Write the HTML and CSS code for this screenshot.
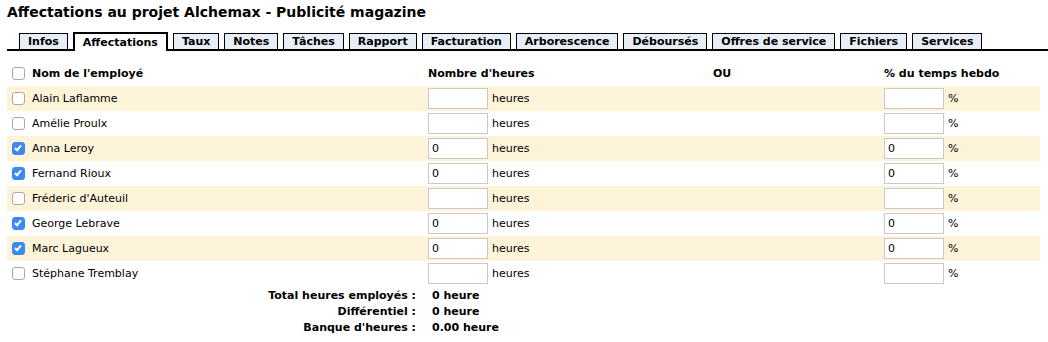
FILE: index.html
```html
<!DOCTYPE html>
<html lang="fr">
  <head>
    <meta charset="utf-8" />
    <title>Affectations au projet Alchemax</title>
    <link rel="stylesheet" href="styles.css">
  </head>
  <body>
    <h1 class="title">Affectations au projet Alchemax - Publicité magazine</h1>

    <ul class="tabs">
      <li>Infos</li>
      <li class="active">Affectations</li>
      <li>Taux</li>
      <li>Notes</li>
      <li>Tâches</li>
      <li>Rapport</li>
      <li>Facturation</li>
      <li>Arborescence</li>
      <li>Déboursés</li>
      <li>Offres de service</li>
      <li>Fichiers</li>
      <li>Services</li>
    </ul>

    <div class="assign">
      <div class="row head">
        <label class="emp"><input type="checkbox"> Nom de l'employé</label>
        <span>Nombre d'heures</span>
        <span>OU</span>
        <span>% du temps hebdo</span>
      </div>

      <div class="row stripe">
        <label class="emp"><input type="checkbox"> Alain Laflamme</label>
        <span class="amount"><input type="text"> heures</span>
        <span></span>
        <span class="amount"><input type="text"> %</span>
      </div>
      <div class="row">
        <label class="emp"><input type="checkbox"> Amélie Proulx</label>
        <span class="amount"><input type="text"> heures</span>
        <span></span>
        <span class="amount"><input type="text"> %</span>
      </div>
      <div class="row stripe">
        <label class="emp"><input type="checkbox" checked> Anna Leroy</label>
        <span class="amount"><input type="text" value="0"> heures</span>
        <span></span>
        <span class="amount"><input type="text" value="0"> %</span>
      </div>
      <div class="row">
        <label class="emp"><input type="checkbox" checked> Fernand Rioux</label>
        <span class="amount"><input type="text" value="0"> heures</span>
        <span></span>
        <span class="amount"><input type="text" value="0"> %</span>
      </div>
      <div class="row stripe">
        <label class="emp"><input type="checkbox"> Fréderic d'Auteuil</label>
        <span class="amount"><input type="text"> heures</span>
        <span></span>
        <span class="amount"><input type="text"> %</span>
      </div>
      <div class="row">
        <label class="emp"><input type="checkbox" checked> George Lebrave</label>
        <span class="amount"><input type="text" value="0"> heures</span>
        <span></span>
        <span class="amount"><input type="text" value="0"> %</span>
      </div>
      <div class="row stripe">
        <label class="emp"><input type="checkbox" checked> Marc Lagueux</label>
        <span class="amount"><input type="text" value="0"> heures</span>
        <span></span>
        <span class="amount"><input type="text" value="0"> %</span>
      </div>
      <div class="row">
        <label class="emp"><input type="checkbox"> Stéphane Tremblay</label>
        <span class="amount"><input type="text"> heures</span>
        <span></span>
        <span class="amount"><input type="text"> %</span>
      </div>
    </div>

    <dl class="totals">
      <dt>Total heures employés :</dt>
      <dd>0 heure</dd>
      <dt>Différentiel :</dt>
      <dd>0 heure</dd>
      <dt>Banque d'heures :</dt>
      <dd>0.00 heure</dd>
    </dl>
  </body>
</html>
```

FILE: styles.css
```css
*,
*::before,
*::after {
  box-sizing: border-box;
}

* {
  margin: 0;
}

body {
  font-family: Verdana, "DejaVu Sans", sans-serif;
  font-size: 11px;
  color: #000;
  background: #fff;
  padding: 4px 8px 0 7px;
}

.title {
  font-size: 14px;
  font-weight: bold;
  line-height: 17px;
}

.tabs {
  list-style: none;
  display: flex;
  align-items: flex-end;
  gap: 5px;
  padding: 0 0 0 12px;
  margin: 11px -8px 0 0;
  border-bottom: 2px solid #000;
}

.tabs li {
  font-weight: bold;
  height: 16px;
  line-height: 15px;
  padding: 0 8px;
  background: #e8eef7;
  border: 1px solid #000;
  border-bottom: none;
}

.tabs li.active {
  height: 19px;
  line-height: 17px;
  background: #fff;
  border: 2px solid #000;
  border-bottom: none;
  margin-bottom: -2px;
}

.assign {
  margin-top: 10px;
}

.row {
  display: grid;
  grid-template-columns: 421px 285px 171px 1fr;
  align-items: center;
  height: 25px;
}

.row.head {
  font-weight: bold;
}

.row.stripe {
  background: #fdf3d9;
}

.emp {
  display: flex;
  align-items: center;
  gap: 7px;
  padding-left: 5px;
}

.emp input {
  appearance: none;
  width: 13px;
  height: 13px;
  margin: 0;
  border: 1px solid #a9a9a9;
  border-radius: 3px;
  background: #fff;
  position: relative;
}

.emp input:checked {
  background: #3a8af6;
  border-color: #3a8af6;
}

.emp input:checked::after {
  content: "";
  position: absolute;
  left: 3px;
  top: 1px;
  width: 4px;
  height: 7px;
  border: solid #fff;
  border-width: 0 2px 2px 0;
  transform: rotate(40deg);
}

.amount {
  display: flex;
  align-items: center;
  gap: 4px;
}

.amount input {
  width: 60px;
  height: 21px;
  padding: 0 3px;
  border: 1px solid #c8c8c8;
  font-family: inherit;
  font-size: 11px;
  color: #000;
}

.totals {
  display: grid;
  grid-template-columns: 409px auto;
  column-gap: 16px;
  font-weight: bold;
  line-height: 16px;
  padding-top: 2px;
}

.totals dt {
  text-align: right;
}

.totals dd {
  margin: 0;
}
```
